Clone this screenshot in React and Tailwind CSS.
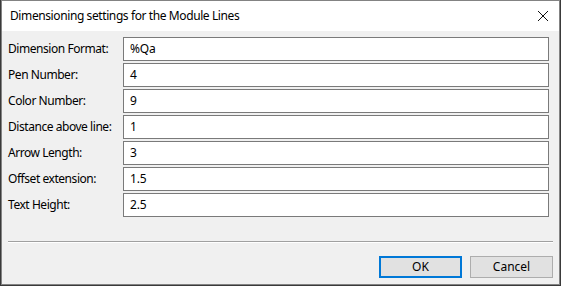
import React from "react";

const rows = [
  ["Dimension Format:", "%Qa"],
  ["Pen Number:", "4"],
  ["Color Number:", "9"],
  ["Distance above line:", "1"],
  ["Arrow Length:", "3"],
  ["Offset extension:", "1.5"],
  ["Text Height:", "2.5"],
];

export default function App() {
  return (
    <div
      className="w-[561px] h-[286px] bg-[#3a3a3a] overflow-hidden"
      style={{ fontFamily: '"Noto Sans", "Liberation Sans", sans-serif' }}
    >
      <div className="ml-px w-[559px] h-[285px] border border-[#838383] bg-[#f0f0f0] flex flex-col text-[12px] text-black">
        <div className="h-[30px] bg-white flex items-center justify-between pl-[8px] pr-[8px] shrink-0">
          <span className="text-[12px] leading-none tracking-[-0.4px]">Dimensioning settings for the Module Lines</span>
          <svg width="12" height="12" viewBox="0 0 12 12" className="mr-[2px]">
            <path d="M1 1 L11 11 M11 1 L1 11" stroke="#111" strokeWidth="1" />
          </svg>
        </div>
        <div className="flex flex-col gap-[2px] pt-[6px] pl-[6px] pr-[10px]">
          {rows.map(([label, value]) => (
            <div key={label} className="flex items-center h-[24px]">
              <div className="w-[115px] shrink-0 tracking-[-0.45px] whitespace-nowrap">{label}</div>
              <div className="flex-1 h-[24px] border border-[#7a7a7a] bg-white flex items-center pl-[6px] tracking-[-0.2px]">
                {value}
              </div>
            </div>
          ))}
        </div>
        <div className="mt-[24px] mx-[6px] h-px bg-[#a0a0a0]" />
        <div className="mx-[6px] h-px bg-white" />
        <div className="flex justify-end gap-[8px] pr-[6px] mt-[13px]">
          <button className="w-[83px] h-[22px] border-2 border-[#0078d7] bg-[#e1e1e1] text-[12px] leading-none flex items-center justify-center">
            OK
          </button>
          <button className="w-[83px] h-[22px] border border-[#adadad] bg-[#e1e1e1] text-[12px] leading-none flex items-center justify-center">
            Cancel
          </button>
        </div>
      </div>
    </div>
  );
}
